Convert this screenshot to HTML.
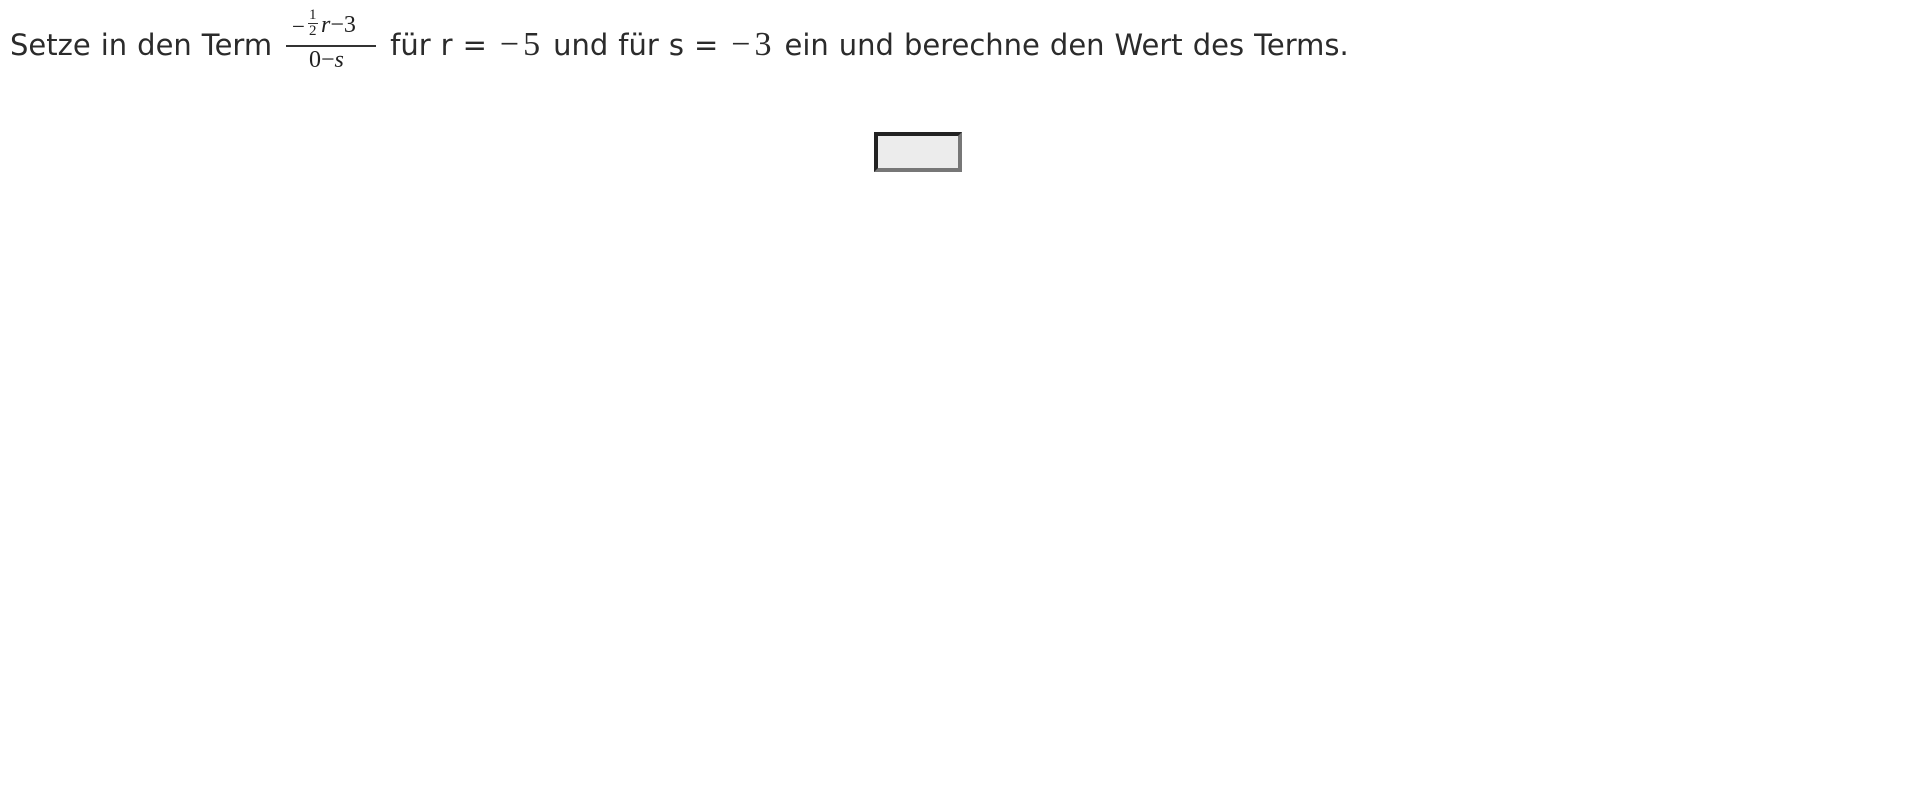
<!DOCTYPE html>
<html><head><meta charset="utf-8"><style>
body{margin:0;background:#fff;width:1920px;height:810px;position:relative;overflow:hidden}
.t{position:absolute;left:10px;top:25px;font-family:"DejaVu Sans","Liberation Sans",sans-serif;font-size:29px;color:#2b2b2b;white-space:nowrap;line-height:40px;word-spacing:0.8px}
.m{font-family:"Liberation Serif",serif;font-size:34px;margin:0 3px;letter-spacing:4px}
.m b{font-weight:normal;letter-spacing:0}
.fr{position:absolute;left:286px;top:0;width:90px;height:75px;font-family:"Liberation Serif",serif;color:#222}
.fr span{position:absolute;white-space:nowrap}
.bar{position:absolute;left:0;top:45px;width:90px;height:1.5px;background:#333}
i{font-style:italic}
.box{position:absolute;left:874px;top:132px;width:80px;height:32px;background:#ececec;border-top:4px solid #222;border-left:4px solid #222;border-right:4px solid #777;border-bottom:4px solid #777;box-sizing:content-box}
</style></head><body>
<div class="t">Setze in den Term<span style="display:inline-block;width:118px"></span>für r = <span class="m">−<b>5</b></span> und für s = <span class="m">−<b>3</b></span> ein und berechne den Wert des Terms.</div>
<div class="fr">
<span style="left:6px;top:15px;font-size:23px;line-height:23px">−</span>
<span style="left:23px;top:8px;font-size:15px;line-height:15px">1</span>
<span style="left:22px;top:23px;width:10px;height:1px;background:#333"></span>
<span style="left:23px;top:24px;font-size:15px;line-height:15px">2</span>
<span style="left:35px;top:13px;font-size:24px;line-height:24px"><i>r</i>−3</span>
<div class="bar"></div>
<span style="left:23px;top:48px;font-size:24px;line-height:24px">0−<i>s</i></span>
</div>
<div class="box"></div>
</body></html>
